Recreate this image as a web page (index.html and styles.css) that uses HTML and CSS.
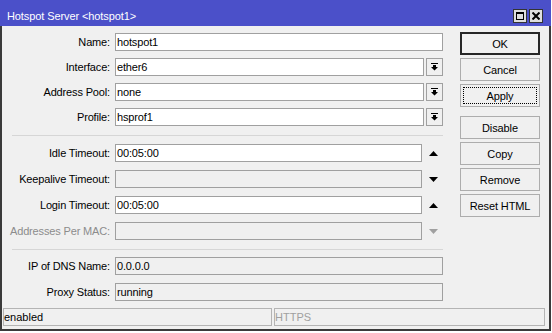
FILE: index.html
```html
<!DOCTYPE html>
<html lang="en">
<head>
  <meta charset="UTF-8" />
  <meta name="viewport" content="width=device-width, initial-scale=1.0"/>
  <title>Hotspot Server &lt;hotspot1&gt;</title>
  <link rel="stylesheet" href="styles.css">
</head>
<body>
  <div class="window">
    <div class="title-bar">
      <span class="title">Hotspot Server &lt;hotspot1&gt;</span>
      <div class="title-buttons">
        <button class="tb-btn" title="Maximize">
          <svg width="8" height="8" viewBox="0 0 8 8"><path d="M0 0h8v8H0z M1 2v5h6V2z" fill="#000" fill-rule="evenodd"/></svg>
        </button>
        <button class="tb-btn" title="Close">
          <svg width="8" height="8" viewBox="0 0 8 8"><path d="M0.5 0.5l7 7M7.5 0.5l-7 7" stroke="#000" stroke-width="2"/></svg>
        </button>
      </div>
    </div>

    <div class="window-body">
      <div class="main">
        <div class="form">
          <div class="section">
            <label class="label"><span>Name:</span></label>
            <div class="field"><input class="input" value="hotspot1"></div>

            <label class="label"><span>Interface:</span></label>
            <div class="field">
              <input class="input" value="ether6">
              <button class="dropdown"><svg width="7" height="8" viewBox="0 0 7 8"><path d="M0 0h7v1H0z M2 2h3v2H2z M0 4h7L3.5 7.5z"/></svg></button>
            </div>

            <label class="label"><span>Address Pool:</span></label>
            <div class="field">
              <input class="input" value="none">
              <button class="dropdown"><svg width="7" height="8" viewBox="0 0 7 8"><path d="M0 0h7v1H0z M2 2h3v2H2z M0 4h7L3.5 7.5z"/></svg></button>
            </div>

            <label class="label"><span>Profile:</span></label>
            <div class="field">
              <input class="input" value="hsprof1">
              <button class="dropdown"><svg width="7" height="8" viewBox="0 0 7 8"><path d="M0 0h7v1H0z M2 2h3v2H2z M0 4h7L3.5 7.5z"/></svg></button>
            </div>
          </div>

          <div class="sep"></div>

          <div class="section wide">
            <label class="label"><span>Idle Timeout:</span></label>
            <div class="field">
              <input class="input" value="00:05:00">
              <span class="spin"><svg width="9" height="5" viewBox="0 0 9 5"><path d="M4.5 0L9 5H0z"/></svg></span>
            </div>

            <label class="label"><span>Keepalive Timeout:</span></label>
            <div class="field">
              <input class="input" value="" disabled>
              <span class="spin"><svg width="9" height="5" viewBox="0 0 9 5"><path d="M0 0h9L4.5 5z"/></svg></span>
            </div>

            <label class="label"><span>Login Timeout:</span></label>
            <div class="field">
              <input class="input" value="00:05:00">
              <span class="spin"><svg width="9" height="5" viewBox="0 0 9 5"><path d="M4.5 0L9 5H0z"/></svg></span>
            </div>

            <label class="label disabled"><span>Addresses Per MAC:</span></label>
            <div class="field">
              <input class="input" value="" disabled>
              <span class="spin"><svg width="9" height="5" viewBox="0 0 9 5"><path d="M0 0h9L4.5 5z" fill="#a0a0a0"/></svg></span>
            </div>
          </div>

          <div class="sep sep-last"></div>

          <div class="section wide">
            <label class="label"><span>IP of DNS Name:</span></label>
            <div class="field"><input class="input" value="0.0.0.0" readonly></div>

            <label class="label"><span>Proxy Status:</span></label>
            <div class="field"><input class="input" value="running" readonly></div>
          </div>
        </div>

        <div class="buttons">
          <button class="btn default">OK</button>
          <button class="btn">Cancel</button>
          <button class="btn focused">Apply</button>
          <button class="btn spaced">Disable</button>
          <button class="btn">Copy</button>
          <button class="btn">Remove</button>
          <button class="btn">Reset HTML</button>
        </div>
      </div>

      <div class="statusbar">
        <div class="status-cell">enabled</div>
        <div class="status-cell muted">HTTPS</div>
      </div>
    </div>
  </div>
</body>
</html>
```

FILE: styles.css
```css
body {
  margin: 0;
  font-family: "Liberation Sans", Arial, sans-serif;
  font-size: 11px;
  color: #000;
  background-color: #fff;
}

.window {
  width: 551px;
  height: 331px;
  display: flex;
  flex-direction: column;
}

/* Title bar */
.title-bar {
  height: 26px;
  flex-shrink: 0;
  display: flex;
  justify-content: space-between;
  padding: 0 8px 0 7px;
  background-color: #4b50c9;
  color: #fff;
}

.title {
  padding-top: 6px;
  line-height: 20px;
  letter-spacing: -0.1px;
}

.title-buttons {
  display: flex;
  gap: 2px;
  margin-top: 9px;
}

.tb-btn {
  width: 14px;
  height: 14px;
  padding: 0;
  border: 1px solid #333;
  background-color: #dedede;
  display: flex;
  align-items: center;
  justify-content: center;
}

/* Body */
.window-body {
  flex: 1;
  display: flex;
  flex-direction: column;
  background-color: #f0f0f0;
  border: 2px solid #3a3a3a;
  border-top: none;
}

.main {
  flex: 1;
  display: flex;
  gap: 17px;
  padding: 7px 8px 0 10px;
}

.form {
  width: 431px;
}

.section {
  display: grid;
  grid-template-columns: 98px 1fr;
  column-gap: 5px;
  row-gap: 7px;
}

.section.wide {
  row-gap: 8px;
}

.label {
  display: flex;
  justify-content: flex-end;
  line-height: 18px;
  white-space: nowrap;
  letter-spacing: -0.15px;
}

.label.disabled {
  color: #8c8c8c;
}

.field {
  display: flex;
  gap: 2px;
  height: 18px;
}

.input {
  flex: 1;
  min-width: 0;
  height: 18px;
  box-sizing: border-box;
  margin: 0;
  padding: 0 1px;
  border: 1px solid #a0a0a0;
  background-color: #fff;
  font: inherit;
  letter-spacing: -0.15px;
  color: #000;
  outline: none;
}

.input:disabled,
.input[readonly] {
  background-color: #f0f0f0;
}

.dropdown {
  width: 17px;
  height: 18px;
  box-sizing: border-box;
  padding: 0;
  border: 1px solid #a0a0a0;
  background-color: #f0f0f0;
  display: flex;
  align-items: center;
  justify-content: center;
}

.spin {
  width: 19px;
  display: flex;
  align-items: center;
  justify-content: center;
}

.sep {
  border-top: 1px solid #d6d6d6;
  margin: 9px 0 8px;
}

.sep-last {
  margin-bottom: 7px;
}

/* Buttons column */
.buttons {
  width: 80px;
  display: flex;
  flex-direction: column;
  gap: 3px;
  margin-top: -1px;
}

.btn {
  height: 23px;
  box-sizing: border-box;
  padding: 0;
  border: 1px solid #adadad;
  background-color: #f0f0f0;
  font: inherit;
  letter-spacing: -0.1px;
  color: #000;
}

.btn.default {
  border: 2px solid #262626;
}

.btn.focused {
  outline: 1px dotted #000;
  outline-offset: -4px;
}

.btn.spaced {
  margin-top: 6px;
}

/* Status bar */
.statusbar {
  display: grid;
  grid-template-columns: 269px 1fr;
  gap: 2px;
  height: 18px;
  margin: 0 4px 3px 1px;
}

.status-cell {
  border: 1px solid #b4b4b4;
  line-height: 16px;
  padding: 0;
}

.status-cell.muted {
  color: #a0a0a0;
}
```
